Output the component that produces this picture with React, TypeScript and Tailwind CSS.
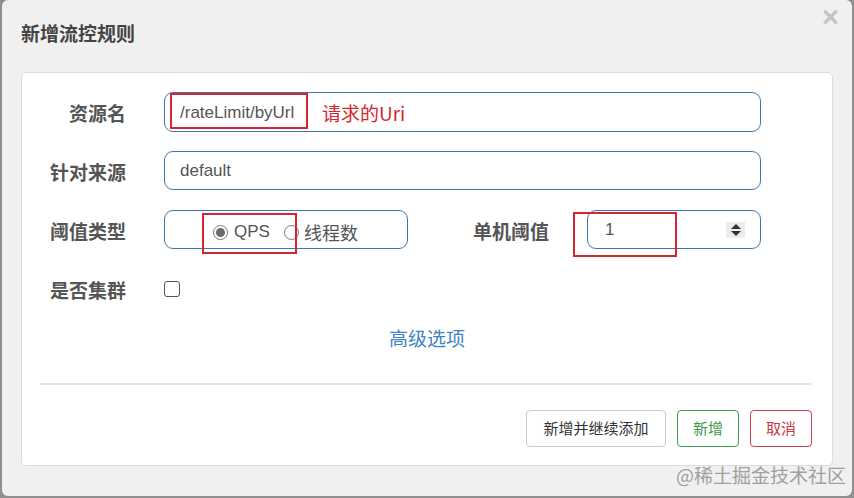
import React from "react";

const cjk = { fontFamily: '"Noto Sans CJK SC", "Noto Sans", sans-serif' };
const latin = { fontFamily: '"Liberation Sans", Arial, "Noto Sans CJK SC", sans-serif' };

function Label({ children, w }: { children: React.ReactNode; w: string }) {
  return (
    <div className={`${w} shrink-0 pt-[3px] text-right text-[19px] font-bold leading-[20px] text-[#555]`} style={cjk}>
      {children}
    </div>
  );
}

export default function App() {
  return (
    <div className="relative flex h-[498px] w-[854px] overflow-hidden bg-[#8f8f8f]">
      <div className="ml-[2px] flex h-[496px] w-[850px] flex-col rounded-[6px] bg-[#f0f0f0]">
        <div className="relative h-[72px] shrink-0">
          <div className="pl-[19px] pt-[23px] text-[19px] font-bold leading-[20px] text-[#444]" style={cjk}>
            新增流控规则
          </div>
          <div
            className="absolute right-[13px] top-[2px] text-[29px] font-bold leading-[30px] text-[#c4c4c4]"
            style={latin}
          >
            ×
          </div>
        </div>

        <div className="ml-[19px] flex h-[394px] w-[812px] flex-col rounded-[5px] border border-[#dcdcdc] bg-white">
          <div className="flex flex-col gap-[20px] pt-[19px]">
            {/* row 1 */}
            <div className="flex h-[39px] items-center">
              <Label w="w-[104px]">资源名</Label>
              <div className="relative ml-[38px] flex h-[40px] w-[597px] items-center rounded-[9px] border border-[#3d78ad] pl-[15px] pt-[2px] text-[17px] text-[#555]" style={latin}>
                /rateLimit/byUrl
                <div className="absolute left-[5px] top-[0px] h-[36px] w-[138px] border-2 border-[#d6252e]" />
                <div className="absolute left-[157px] top-[9px] text-[19px] leading-[22px] text-[#d6252e]" style={cjk}>
                  请求的Uri
                </div>
              </div>
            </div>

            {/* row 2 */}
            <div className="flex h-[39px] items-center">
              <Label w="w-[104px]">针对来源</Label>
              <div className="ml-[38px] flex h-[39px] w-[597px] items-center rounded-[9px] border border-[#3d78ad] pl-[15px] pt-[1px] text-[17px] text-[#555]" style={latin}>
                default
              </div>
            </div>

            {/* row 3 */}
            <div className="flex h-[39px] items-center">
              <Label w="w-[104px]">阈值类型</Label>
              <div className="relative ml-[38px] flex h-[39px] w-[244px] items-center rounded-[9px] border border-[#3d78ad] pl-[48px] pt-[5px] text-[#555]">
                <span className="flex h-[15px] w-[15px] items-center justify-center rounded-full border border-[#777] bg-white">
                  <span className="h-[9px] w-[9px] rounded-full bg-[#6a6a6a]" />
                </span>
                <span className="ml-[6px] text-[17px]" style={latin}>QPS</span>
                <span className="ml-[14px] h-[15px] w-[15px] rounded-full border border-[#777] bg-white" />
                <span className="ml-[5px] text-[18px]" style={cjk}>线程数</span>
                <div className="absolute left-[37px] top-[2px] h-[41px] w-[95px] border-2 border-[#d6252e]" />
              </div>
              <Label w="w-[141px]">单机阈值</Label>
              <div className="relative ml-[38px] flex h-[39px] w-[174px] items-center rounded-[9px] border border-[#3d78ad] pl-[17px] text-[17px] text-[#555]" style={latin}>
                1
                <div className="absolute right-[15px] top-[11px] flex h-[16px] w-[19px] flex-col items-center justify-center gap-[2px] bg-[#ececec]">
                  <svg width="10" height="5" viewBox="0 0 10 5"><path d="M0 5 L5 0 L10 5 Z" fill="#333" /></svg>
                  <svg width="10" height="5" viewBox="0 0 10 5"><path d="M0 0 L5 5 L10 0 Z" fill="#333" /></svg>
                </div>
                <div className="absolute left-[-15px] top-[1px] h-[45px] w-[104px] border-2 border-[#d6252e]" />
              </div>
            </div>

            {/* row 4 */}
            <div className="flex h-[39px] items-center">
              <Label w="w-[104px]">是否集群</Label>
              <div className="ml-[38px] h-[16px] w-[16px] rounded-[3px] border border-[#555] bg-white" />
            </div>
          </div>

          <div className="mt-[20px] text-center text-[19px] leading-[20px] text-[#3f83c4]" style={cjk}>
            高级选项
          </div>

          <div className="ml-[18px] mt-[35px] h-[2px] w-[772px] bg-[#e4e4e4]" />

          <div className="mt-[25px] flex justify-end gap-[11px] pr-[20px]" style={cjk}>
            <div className="flex h-[37px] w-[140px] items-center justify-center rounded-[4px] border border-[#ccc] text-[15px] text-[#333]">
              新增并继续添加
            </div>
            <div className="flex h-[37px] w-[62px] items-center justify-center rounded-[4px] border border-[#3f9d4f] text-[15px] text-[#3a9a48]">
              新增
            </div>
            <div className="flex h-[37px] w-[62px] items-center justify-center rounded-[4px] border border-[#c8404b] text-[15px] text-[#c8343f]">
              取消
            </div>
          </div>
        </div>
      </div>

      <div className="absolute left-[676px] top-[464px] text-[19px] leading-[22px] text-[#a0a0a0]" style={cjk}>
        @稀土掘金技术社区
      </div>
    </div>
  );
}
